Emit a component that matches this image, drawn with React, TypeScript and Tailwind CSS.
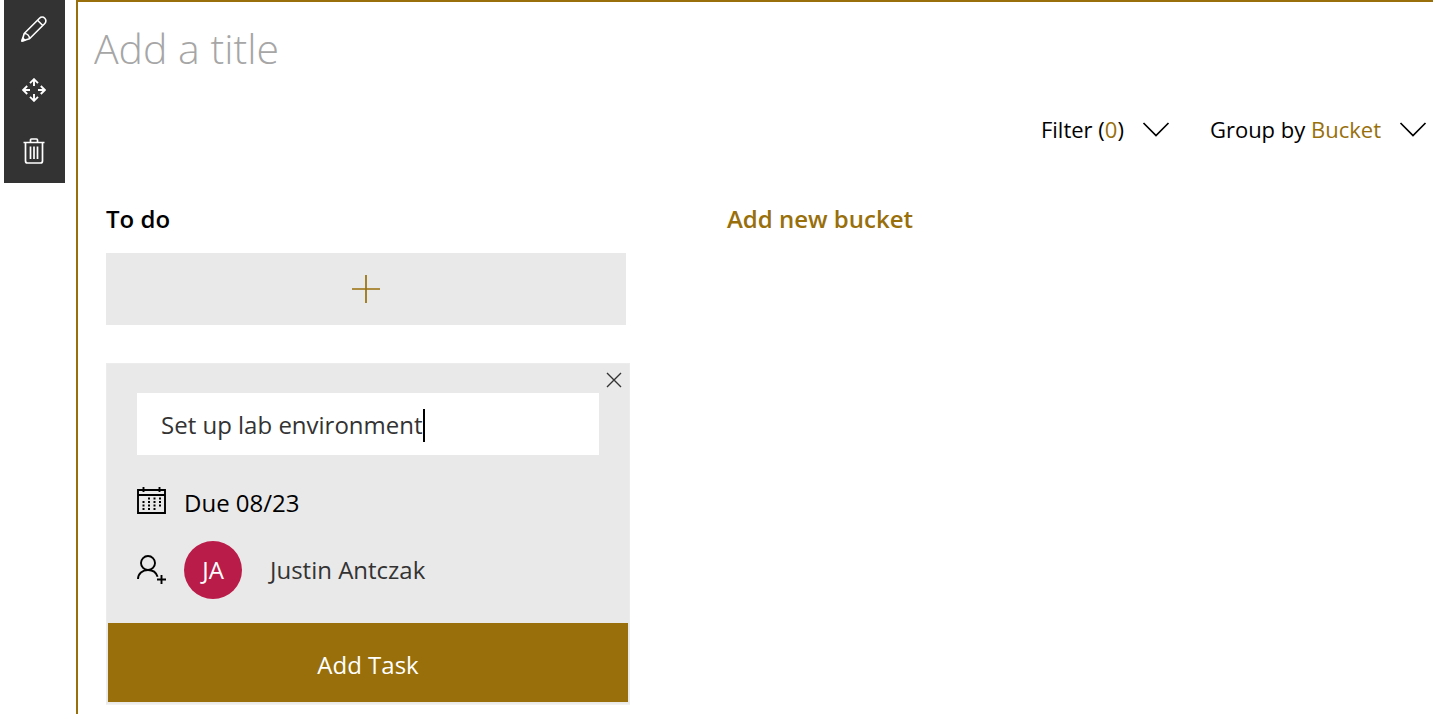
import { useState, type ReactNode } from "react";

type ToolButtonProps = {
  label: string;
  children: ReactNode;
};

function ToolButton({ label, children }: ToolButtonProps) {
  return (
    <button
      type="button"
      aria-label={label}
      className="flex h-[61px] w-full items-center justify-center pb-1 pr-0.5 text-white"
    >
      {children}
    </button>
  );
}

function PencilIcon() {
  return (
    <svg width="28" height="28" viewBox="0 0 28 28" fill="none" stroke="currentColor" strokeWidth="1.600" strokeLinejoin="round">
      <path d="M2 26l2.200-7.500L19.500 3.200a3.700 3.700 0 0 1 5.300 5.300L9.500 23.800z" />
      <path d="M4.200 18.500c3 0 5.300 2.300 5.300 5.300M17.500 5.200l5.300 5.300" />
      <path d="M2 26l.8-3 2.200 2.200z" fill="currentColor" />
    </svg>
  );
}

function MoveIcon() {
  return (
    <svg width="24" height="24" viewBox="0 0 24 24" fill="none" stroke="currentColor" strokeWidth="1.900">
      <path d="M12 8V1.500M8 5.200l4-4 4 4M12 16v6.500M8 18.800l4 4 4-4" />
      <path d="M8 12H1.500M5.200 8l-4 4 4 4M16 12h6.500M18.800 8l4 4-4 4" />
    </svg>
  );
}

function TrashIcon() {
  return (
    <svg width="22" height="28" viewBox="0 0 22 28" fill="none" stroke="currentColor" strokeWidth="1.700">
      <path d="M.5 5.500h21M7.500 5V3q0-1 1-1h5q1 0 1 1v2M2.500 5.500V24q0 2 2 2h13q2 0 2-2V5.500" />
      <path d="M7.500 9.500v12.500M11 9.500v12.500M14.500 9.500v12.500" />
    </svg>
  );
}

function ChevronIcon() {
  return (
    <svg width="28" height="16" viewBox="0 0 28 16" fill="none" stroke="currentColor" strokeWidth="1.700">
      <path d="M1.500 2L14 14.500L26.500 2" />
    </svg>
  );
}

function PlusIcon() {
  return (
    <svg width="28" height="28" viewBox="0 0 28 28" fill="none" stroke="currentColor" strokeWidth="1.700">
      <path d="M14 0v28M0 14h28" />
    </svg>
  );
}

function CloseIcon() {
  return (
    <svg width="16" height="16" viewBox="0 0 16 16" fill="none" stroke="currentColor" strokeWidth="1.400">
      <path d="M1 1l14 14M15 1L1 15" />
    </svg>
  );
}

function CalendarIcon() {
  return (
    <svg width="29" height="28" viewBox="0 0 29 28" fill="none" stroke="currentColor">
      <path d="M1 3h27v23H1zM1 8h27M6.500 0v5M22.500 0v5" strokeWidth="1.900" />
      <path
        d="M11 11.500h2M16.500 11.500h2M22 11.500h2M5.500 15h2M11 15h2M16.500 15h2M22 15h2M5.500 18.500h2M11 18.500h2M16.500 18.500h2M22 18.500h2M5.500 22h2M11 22h2M16.500 22h2"
        strokeWidth="2"
      />
    </svg>
  );
}

function AddPersonIcon() {
  return (
    <svg width="30" height="30" viewBox="0 0 30 30" fill="none" stroke="currentColor" strokeWidth="1.900">
      <circle cx="11" cy="8" r="7" />
      <path d="M1 24c0-5.500 4.500-9 10-9 4.500 0 8.300 2.600 9.600 6.800M24.500 20v9M20 24.500H29" />
    </svg>
  );
}

function TaskCard() {
  const [name, setName] = useState("Set up lab environment");

  return (
    <form
      className="mt-[38px] flex flex-col border border-[#ececec] bg-[#e9e9e9] shadow-2xs"
      onSubmit={(event) => event.preventDefault()}
    >
      <div className="flex h-[29px] items-center justify-end pr-[7px] pt-0.5">
        <button type="button" aria-label="Close" className="text-[#333333]">
          <CloseIcon />
        </button>
      </div>

      <label className="mx-[30px] flex h-[62px] items-center bg-white px-6 pt-0.5">
        <input
          type="text"
          aria-label="Task name"
          value={name}
          onChange={(event) => setName(event.target.value)}
          className="field-sizing-content max-w-full text-2xl text-[#333333] caret-transparent outline-none"
        />
        <span className="h-[33px] w-0.5 shrink-0 bg-black" />
      </label>

      <button type="button" className="mx-[30px] mt-[30px] flex h-9 items-center gap-[18px] text-2xl text-black">
        <span className="pb-1">
          <CalendarIcon />
        </span>
        Due 08/23
      </button>

      <button type="button" className="mx-[30px] mb-6 mt-5 flex h-[58px] items-center text-2xl text-[#333333]">
        <span className="text-black">
          <AddPersonIcon />
        </span>
        <span className="ml-[17px] flex size-[58px] items-center justify-center rounded-full bg-[#ba1c49] text-white">
          JA
        </span>
        <span className="ml-7">Justin Antczak</span>
      </button>

      <button type="submit" className="mx-px mb-px h-[79px] bg-[#986f0b] pt-1 text-2xl text-white">
        Add Task
      </button>
    </form>
  );
}

export default function App() {
  return (
    <div className="flex min-h-screen overflow-x-hidden bg-white pl-1 font-['Open_Sans',sans-serif] text-black">
      <aside className="mr-[11px] w-[61px] shrink-0 self-start bg-[#333333]">
        <ToolButton label="Edit web part">
          <PencilIcon />
        </ToolButton>
        <ToolButton label="Move web part">
          <MoveIcon />
        </ToolButton>
        <ToolButton label="Delete web part">
          <TrashIcon />
        </ToolButton>
      </aside>

      <main className="min-w-0 flex-1 border-l-2 border-t-2 border-[#986f0b]">
        <input
          type="text"
          aria-label="Title"
          placeholder="Add a title"
          className="block h-[91px] w-full px-4 text-[41px] font-light outline-none placeholder:text-[#a6a6a6]"
        />

        <div className="flex h-[72px] items-center justify-end gap-10 pr-[6px] text-[22px]">
          <button type="button" className="flex items-center gap-[18px]">
            <span>
              Filter (<span className="text-[#986f0b]">0</span>)
            </span>
            <ChevronIcon />
          </button>
          <button type="button" className="flex items-center gap-[18px]">
            <span>
              Group by <span className="text-[#986f0b]">Bucket</span>
            </span>
            <ChevronIcon />
          </button>
        </div>

        <div className="flex gap-[97px] pl-7 pt-[38px]">
          <section className="w-[524px] shrink-0">
            <h2 className="h-[50px] text-2xl font-semibold">To do</h2>
            <div className="pr-1">
              <button
                type="button"
                aria-label="Add task"
                className="flex h-[72px] w-full items-center justify-center bg-[#e9e9e9] text-[#986f0b]"
              >
                <PlusIcon />
              </button>
            </div>
            <TaskCard />
          </section>

          <section>
            <button type="button" className="text-2xl font-semibold text-[#986f0b]">
              Add new bucket
            </button>
          </section>
        </div>
      </main>
    </div>
  );
}
